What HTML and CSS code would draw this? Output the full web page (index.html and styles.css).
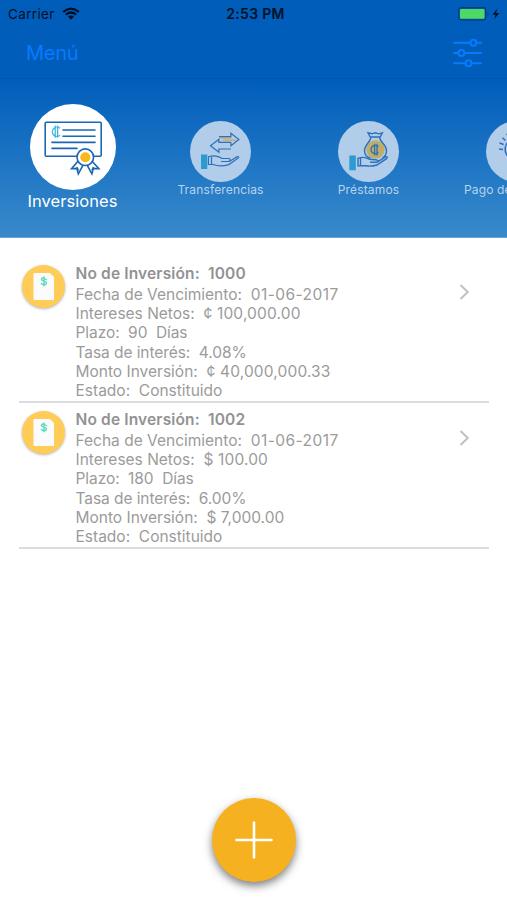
FILE: index.html
```html
<!DOCTYPE html>
<html lang="es">
<head>
<meta charset="utf-8">
<title>Inversiones</title>
<link rel="stylesheet" href="styles.css">
</head>
<body>
<div class="screen">
  <header class="top">
    <div class="status">
      <div class="carrier"><span>Carrier</span>
        <svg width="18" height="13" viewBox="0 0 18 13" fill="none" stroke="#001127" stroke-width="2.3"><path d="M1.2 5Q9-1.8 16.8 5M3.9 7.7Q9 3.4 14.1 7.7"/><path d="M6 9.6Q9 7.4 12 9.6L9 12.7Z" fill="#001127" stroke="none"/></svg>
      </div>
      <div class="time">2:53 PM</div>
      <svg class="battery" width="45" height="14" viewBox="0 0 45 14"><rect x=".7" y=".7" width="27" height="12.2" rx="2.5" fill="none" stroke="#063c79" stroke-width="1.2"/><rect x="2" y="2" width="24.5" height="9.8" rx="1" fill="#4cd964"/><path d="M29.5 4.5q2 2.3 0 4.5z" fill="#063c79"/><path d="M39.4 1.6L34.6 7.7h3L36.2 12.3l5-6.4h-3.2z" fill="#001127"/></svg>
    </div>
    <nav class="bar">
      <span class="menu">Menú</span>
      <svg width="32" height="30" viewBox="0 0 32 30" fill="none" stroke="#087aff" stroke-width="2.1" stroke-linecap="round"><path d="M2 4.8h16M25 4.8h4M2 15h4M13 15h16M2 25.3h11M20 25.3h9"/><circle cx="21.3" cy="4.8" r="3"/><circle cx="9.4" cy="15" r="3"/><circle cx="16.5" cy="25.3" r="3"/></svg>
    </nav>
  </header>
  <section class="tabs">
    <div class="tab active">
      <div class="disc">
        <svg width="86" height="86" viewBox="0 0 86 86" fill="none" stroke="#1b67b5" stroke-width="1.6">
          <rect x="15.2" y="18.2" width="56" height="34" rx="1"/>
          <path d="M33 26h32M33 32.2h32M22 38.4h43M22 44.4h25" stroke-linecap="round"/>
          <path d="M30 24.3A4.6 4.6 0 1 0 30 31.2M25.2 21.6v12.2M27.6 21.6v12.2" stroke="#3ab5df" stroke-width="1.3"/>
          <path d="M49 56L41.6 64.7l5.2-.3 1.5 5.4 5.6-10.2M61 56l7.8 8.7-5.4-.3-1.5 5.4-5.6-10.2" fill="#fff"/>
          <circle cx="55.3" cy="53.2" r="8.3" fill="#fff"/><circle cx="55.3" cy="53.2" r="5" fill="#fbb81d" stroke="none"/>
          <path d="M46.8 63l1.6 3.3M63.5 63l-1.6 3.3"/>
        </svg>
      </div>
      <span class="label">Inversiones</span>
    </div>
    <div class="tab">
      <div class="disc">
        <svg width="61" height="61" viewBox="0 0 61 61" fill="none" stroke="#2e70b9" stroke-width="1.2">
          <path d="M29.5 17h12M33 19.2h13" stroke="#c7aa72" stroke-width="1.6"/>
          <path d="M29 15.6h11.9v-3.4l8 6.3-8 6.3v-3.6"/>
          <path d="M41 21.4H28.9v-3.2l-8.4 6.5 8.4 6.5V28H41"/>
          <path d="M18.5 35.7q8-2.5 13.6 1.8h7q2.4 1.5-.5 3H31h8.5l7.7-4.8q2.2-.3 1.2 1.2l-9.5 6.7q-9 2.5-15.7-.1h-4.8z"/><path d="M21.5 36v7"/>
          <path d="M11 33.5h6.3V48H11z" fill="#2d9bd0" stroke="none"/>
        </svg>
      </div>
      <span class="label">Transferencias</span>
    </div>
    <div class="tab">
      <div class="disc">
        <svg width="61" height="61" viewBox="0 0 61 61" fill="none" stroke="#2e70b9" stroke-width="1.4">
          <circle cx="37.5" cy="28.5" r="9.2" fill="#bfae67" stroke="none"/>
          <path d="M32.2 16l-2.2-4.2 4 1 3.3-1 3.4 1 3.6-1-2.1 4.2zM33 16c0 5-6.5 7-6.5 14q.3 6 6 7M41.5 16c0 5 7 7 7 14q-.3 5-4 6.7"/>
          <path d="M40.4 25.8a4.2 4.2 0 1 0 0 5.5M36.6 22.7v11.8M39 22.7v11.8" stroke-width="1.3"/>
          <path d="M20 37.3q6-2.3 11.5 1l6 .4q4 .5 1.5 2.5h-7 7l9-5.6q2.3-.1.6 2l-9.8 6.4q-6 1.8-10.8.8h-8z"/><path d="M22.5 37v7.5"/>
          <path d="M11.3 34.5h6.5v14.8h-6.5z" fill="#2d9bd0" stroke="none"/>
        </svg>
      </div>
      <span class="label">Préstamos</span>
    </div>
    <div class="tab">
      <div class="disc">
        <svg width="61" height="61" viewBox="0 0 61 61" fill="none" stroke="#2e70b9" stroke-width="1.5"><path d="M13 28l4 .5M13.5 22l4.2 1.5M16.5 16.7l3 2.8M20.7 12.7l1.8 3.4"/><path d="M25 38c-9-5-8-20 6-20s15 15 6 20v8H25z"/></svg>
      </div>
      <span class="label">Pago de Servicios</span>
    </div>
  </section>
  <main class="list">
    <article class="item">
      <div class="badge"><svg width="22" height="29" viewBox="0 0 22 29"><path d="M1.5 1H17l4 4v23H1.5Q.5 28 .5 27V2q0-1 1-1z" fill="#fbfbfd"/><path d="M14 8q-5-3.4-5.6-.9c-.5 2 5.5 1.5 5 4.2-.5 2.3-4.5 1.5-5.4-.1M11 4.5v9.7" fill="none" stroke="#55dabc" stroke-width="1.4"/></svg></div>
      <div class="info">
        <h2>No de Inversión:&nbsp; 1000</h2>
        <p>Fecha de Vencimiento:&nbsp; <span class="date">01-06-2017</span></p>
        <p>Intereses Netos:&nbsp; <span class="amount">¢ 100,000.00</span></p>
        <p class="tight">Plazo:&nbsp; 90&nbsp; Días</p>
        <p class="tight">Tasa de interés:&nbsp; 4.08%</p>
        <p>Monto Inversión:&nbsp; <span class="amount">¢ 40,000,000.33</span></p>
        <p>Estado:&nbsp; Constituido</p>
      </div>
      <svg class="chevron" width="11" height="16" viewBox="0 0 11 16" fill="none" stroke="#bdbdbf" stroke-width="1.8"><path d="M1.5 1l7.3 7-7.3 7"/></svg>
    </article>
    <article class="item">
      <div class="badge"><svg width="22" height="29" viewBox="0 0 22 29"><path d="M1.5 1H17l4 4v23H1.5Q.5 28 .5 27V2q0-1 1-1z" fill="#fbfbfd"/><path d="M14 8q-5-3.4-5.6-.9c-.5 2 5.5 1.5 5 4.2-.5 2.3-4.5 1.5-5.4-.1M11 4.5v9.7" fill="none" stroke="#55dabc" stroke-width="1.4"/></svg></div>
      <div class="info">
        <h2>No de Inversión:&nbsp; 1002</h2>
        <p>Fecha de Vencimiento:&nbsp; <span class="date">01-06-2017</span></p>
        <p>Intereses Netos:&nbsp; <span class="amount">$ 100.00</span></p>
        <p class="tight">Plazo:&nbsp; 180&nbsp; Días</p>
        <p class="tight">Tasa de interés:&nbsp; 6.00%</p>
        <p>Monto Inversión:&nbsp; $ 7,000.00</p>
        <p>Estado:&nbsp; Constituido</p>
      </div>
      <svg class="chevron" width="11" height="16" viewBox="0 0 11 16" fill="none" stroke="#bdbdbf" stroke-width="1.8"><path d="M1.5 1l7.3 7-7.3 7"/></svg>
    </article>
  </main>
  <button class="add" aria-label="Agregar"><svg width="38" height="38" viewBox="0 0 38 38" stroke="#fff" stroke-width="2.6" stroke-linecap="round"><path d="M19 1.5v35M1.5 19h35"/></svg></button>
</div>
</body>
</html>
```

FILE: styles.css
```css
* { box-sizing: border-box; }
body { margin: 0; background: #fff; font-family: Inter, "Liberation Sans", sans-serif; }
svg { display: block; flex: none; }
.screen { width: 507px; height: 900px; overflow: hidden; display: flex; flex-direction: column; position: relative; }
.top { height: 79px; background: #005dba; border-bottom: 1px solid #0056b1; flex: none; }
.status { height: 27px; display: grid; grid-template-columns: 1fr auto 1fr; align-items: center; padding: 0 4px 0 8px; color: #001127; font-size: 13.5px; }
.carrier { display: flex; align-items: center; gap: 7px; letter-spacing: .35px; }
.time { font-weight: 600; font-size: 14px; letter-spacing: .3px; }
.battery { justify-self: end; }
.bar { height: 51px; display: flex; align-items: center; justify-content: space-between; padding: 0 23px 0 26px; }
.menu { color: #087aff; font-size: 20px; letter-spacing: -.3px; }
.tabs { height: 159px; flex: none; display: flex; background: linear-gradient(#005dba, #388acb); border-bottom: 1px solid #66a5d8; overflow: hidden; }
.tab { width: 148px; flex: none; display: flex; flex-direction: column; align-items: center; padding-top: 42px; color: #b8d3ed; }
.tab:first-child { margin-left: -1.5px; }
.disc { width: 61px; height: 61px; border-radius: 50%; background: #b1cdea; }
.label { font-size: 12px; line-height: 16px; letter-spacing: .15px; white-space: nowrap; }
.active { padding-top: 25px; color: #fff; }
.active .disc { width: 86px; height: 86px; background: #fff; }
.active .label { font-size: 16.5px; line-height: 22px; letter-spacing: .05px; }
.list { padding: 27px 18px 0 19px; }
.item { display: flex; height: 138px; border-bottom: 2.5px solid #dcdcdc; }
.item + .item { height: 146px; padding-top: 8px; }
.badge { width: 43px; height: 43px; margin: 0 11px 0 3px; border-radius: 50%; background: #ffcc58; display: flex; align-items: center; justify-content: center; flex: none; box-shadow: 0 1px 3px rgba(0,0,0,.3); }
.info { flex: 1; margin-left: -.5px; color: #9b9b9b; white-space: nowrap; }
.info h2 { margin: 0 0 2px; font-size: 15.5px; line-height: 18px; font-weight: 600; color: #929292; letter-spacing: .15px; }
.info p { margin: 0; font-size: 15.5px; line-height: 19.2px; }
.info .tight { letter-spacing: -.07px; }
.date { letter-spacing: .45px; }
.amount { letter-spacing: .15px; }
.chevron { margin: 19px 19px 0 0; }
.add { position: absolute; left: 212px; top: 798px; width: 84px; height: 84px; padding: 0; border: 0; border-radius: 50%; background: #f5b120; display: flex; align-items: center; justify-content: center; box-shadow: 0 4px 8px rgba(0,0,0,.5); }
```
